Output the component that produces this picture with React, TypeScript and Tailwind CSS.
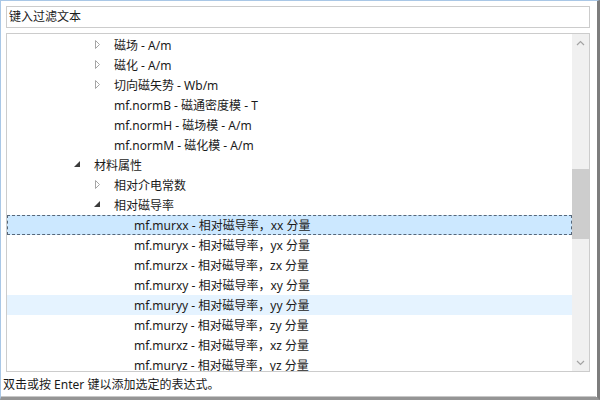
import React from 'react';

type Row = {
  label: string;
  level: number;
  expander?: 'closed' | 'open';
  state?: 'selected' | 'hover';
};

const rows: Row[] = [
  { label: '磁场 - A/m', level: 1, expander: 'closed' },
  { label: '磁化 - A/m', level: 1, expander: 'closed' },
  { label: '切向磁矢势 - Wb/m', level: 1, expander: 'closed' },
  { label: 'mf.normB - 磁通密度模 - T', level: 1 },
  { label: 'mf.normH - 磁场模 - A/m', level: 1 },
  { label: 'mf.normM - 磁化模 - A/m', level: 1 },
  { label: '材料属性', level: 0, expander: 'open' },
  { label: '相对介电常数', level: 1, expander: 'closed' },
  { label: '相对磁导率', level: 1, expander: 'open' },
  { label: 'mf.murxx - 相对磁导率，xx 分量', level: 2, state: 'selected' },
  { label: 'mf.muryx - 相对磁导率，yx 分量', level: 2 },
  { label: 'mf.murzx - 相对磁导率，zx 分量', level: 2 },
  { label: 'mf.murxy - 相对磁导率，xy 分量', level: 2 },
  { label: 'mf.muryy - 相对磁导率，yy 分量', level: 2, state: 'hover' },
  { label: 'mf.murzy - 相对磁导率，zy 分量', level: 2 },
  { label: 'mf.murxz - 相对磁导率，xz 分量', level: 2 },
  { label: 'mf.muryz - 相对磁导率，yz 分量', level: 2 },
];

const indent: Record<number, string> = {
  0: 'pl-[66px]',
  1: 'pl-[86px]',
  2: 'pl-[106px]',
};

const Expander = ({ kind }: { kind?: 'closed' | 'open' }) => (
  <svg width="20" height="20" viewBox="0 0 20 20" className="shrink-0">
    {kind === 'closed' && (
      <polygon points="1.5,5.5 5.5,9.5 1.5,13.5" fill="none" stroke="#a6a6a6" strokeWidth="1" />
    )}
    {kind === 'open' && <polygon points="6,6 6,12 0,12" fill="#3c3c3c" />}
  </svg>
);

const TreeRow = ({ row }: { row: Row }) => {
  let bg = 'border border-transparent';
  if (row.state === 'selected') bg = 'border border-dashed border-[#56677a] bg-[#cce8ff]';
  if (row.state === 'hover') bg = 'border border-transparent bg-[#e5f3ff]';
  return (
    <div className={`h-5 flex items-center ${indent[row.level]} ${bg}`}>
      <Expander kind={row.expander} />
      <span className="relative top-[1px] whitespace-nowrap text-[12px] text-[#1a1a1a]">{row.label}</span>
    </div>
  );
};

export default function App() {
  return (
    <div
      className="w-[600px] h-[400px] flex flex-col bg-white border-t border-l border-[#a9c7e6] border-r-[3px] border-r-[#7d7d7d] border-b-[3px] border-b-[#959595]"
      style={{ fontFamily: '"Noto Sans", "Noto Sans CJK SC", sans-serif' }}
    >
      <div className="flex-1 flex flex-col border-b border-[#c8c8c8] mr-[1px]">
        {/* 过滤框 */}
        <div className="ml-[5px] mt-[5px] w-[584px] h-[22px] border border-[#cccccc] flex items-center pl-[2px]">
          <span className="text-[12px] text-[#1a1a1a]">键入过滤文本</span>
        </div>

        {/* 树 */}
        <div className="ml-[5px] mt-[5px] w-[584px] h-[339px] border border-[#cccccc] flex">
          <div className="flex-1 overflow-hidden pt-[1px]">
            {rows.map((r, i) => (
              <TreeRow key={i} row={r} />
            ))}
          </div>
          <div className="w-[17px] bg-[#f0f0f0] flex flex-col">
            <div className="h-[17px] flex items-center justify-center">
              <svg width="9" height="6" viewBox="0 0 9 6">
                <polyline points="1,5 4.5,1.5 8,5" fill="none" stroke="#a3a3a3" strokeWidth="1.2" />
              </svg>
            </div>
            <div className="flex-1">
              <div className="mt-[118px] h-[70px] bg-[#cdcdcd]" />
            </div>
            <div className="h-[17px] flex items-center justify-center">
              <svg width="9" height="6" viewBox="0 0 9 6">
                <polyline points="1,1 4.5,4.5 8,1" fill="none" stroke="#a3a3a3" strokeWidth="1.2" />
              </svg>
            </div>
          </div>
        </div>

        {/* 状态栏 */}
        <div className="flex-1 flex items-center pl-[2px] pt-[1px]">
          <span className="text-[12px] text-[#1a1a1a]">双击或按 Enter 键以添加选定的表达式。</span>
        </div>
      </div>
    </div>
  );
}
